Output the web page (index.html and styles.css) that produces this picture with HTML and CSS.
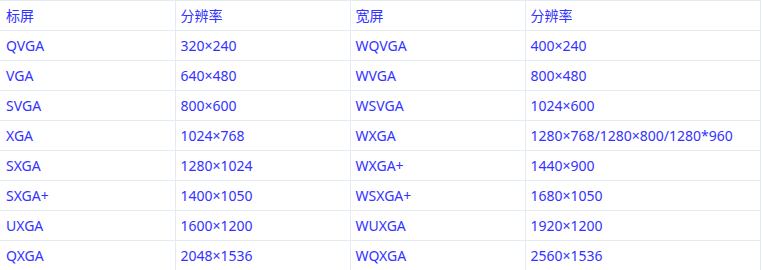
FILE: index.html
```html
<!DOCTYPE html>
<html lang="zh">
<head>
<meta charset="utf-8">
<link rel="stylesheet" href="styles.css">
</head>
<body>
<table class="res">
  <colgroup><col class="c1"><col class="c2"><col class="c3"><col class="c4"></colgroup>
  <tr><td>标屏</td><td>分辨率</td><td>宽屏</td><td>分辨率</td></tr>
  <tr><td>QVGA</td><td>320×240</td><td>WQVGA</td><td>400×240</td></tr>
  <tr><td>VGA</td><td>640×480</td><td>WVGA</td><td>800×480</td></tr>
  <tr><td>SVGA</td><td>800×600</td><td>WSVGA</td><td>1024×600</td></tr>
  <tr><td>XGA</td><td>1024×768</td><td>WXGA</td><td>1280×768/1280×800/1280*960</td></tr>
  <tr><td>SXGA</td><td>1280×1024</td><td>WXGA+</td><td>1440×900</td></tr>
  <tr><td>SXGA+</td><td>1400×1050</td><td>WSXGA+</td><td>1680×1050</td></tr>
  <tr><td>UXGA</td><td>1600×1200</td><td>WUXGA</td><td>1920×1200</td></tr>
  <tr><td>QXGA</td><td>2048×1536</td><td>WQXGA</td><td>2560×1536</td></tr>
</table>
</body>
</html>
```
FILE: styles.css
```css
html, body {
  margin: 0;
  padding: 0;
  background: #ffffff;
}
.res {
  border-collapse: collapse;
  table-layout: fixed;
  width: 760px;
  font-family: "Noto Sans", "Noto Sans CJK SC", sans-serif;
  font-size: 14px;
  color: #3333ff;
}
.c1 { width: 175px; }
.c2 { width: 175px; }
.c3 { width: 175px; }
.c4 { width: 235px; }
.res td {
  height: 29px;
  padding: 0 0 0 5px;
  border: 1px solid #e3ebf3;
  vertical-align: middle;
  white-space: nowrap;
  line-height: 16px;
}
.res td:first-child {
  border-left: none;
  padding-left: 6px;
}
```
